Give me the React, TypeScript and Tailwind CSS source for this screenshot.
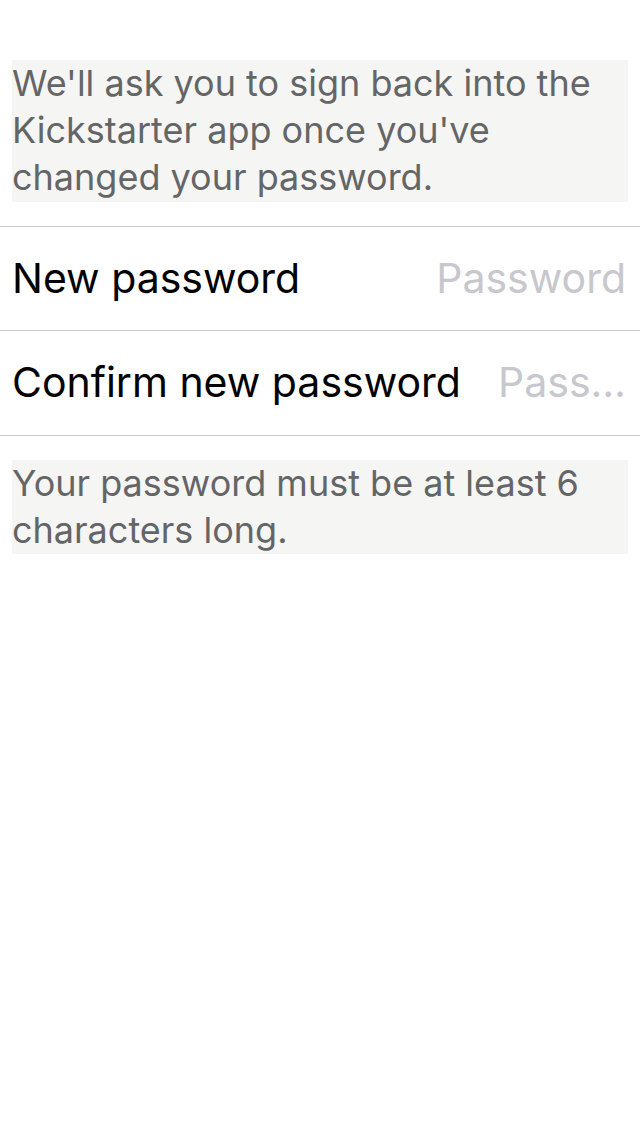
import React from "react";

export default function App() {
  return (
    <div
      className="w-[640px] h-[1136px] bg-white overflow-hidden"
      style={{ fontFamily: "Inter, 'Noto Sans', sans-serif" }}
    >
      <div className="pt-[60px] px-3">
        <div className="bg-[#f5f5f4] text-[#646566] text-[36px] leading-[47px] h-[142px]">
          We'll ask you to sign back into the Kickstarter app once you've changed your password.
        </div>
      </div>
      <div className="mt-[24px] border-t border-[#c8c7cc]">
        <div className="h-[104px] flex items-center justify-between pl-3 pr-[14px] border-b border-[#c8c7cc] gap-9">
          <div className="text-black text-[41px] whitespace-nowrap">New password</div>
          <div className="whitespace-nowrap text-right text-[#c7c7cd] text-[41px]">Password</div>
        </div>
        <div className="h-[105px] flex items-center justify-between pl-3 pr-[14px] border-b border-[#c8c7cc] gap-9">
          <div className="text-black text-[41px] whitespace-nowrap">Confirm new password</div>
          <div className="whitespace-nowrap text-right text-[#c7c7cd] text-[41px]">Pass…</div>
        </div>
      </div>
      <div className="pt-[24px] px-3">
        <div className="bg-[#f5f5f4] text-[#646566] text-[36px] leading-[47px] h-[94px]">
          Your password must be at least 6 characters long.
        </div>
      </div>
    </div>
  );
}
